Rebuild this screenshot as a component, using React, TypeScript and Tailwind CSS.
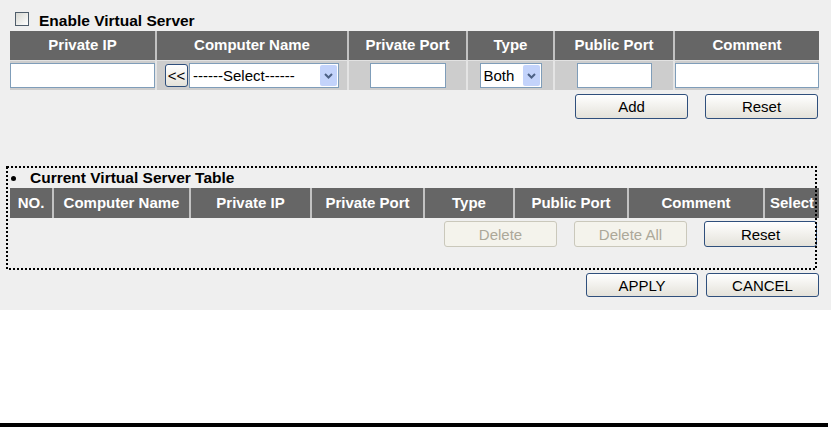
import React from 'react';

const font = "font-['Liberation_Sans',Arial,sans-serif]";

const Chevron = () => (
  <svg width="9" height="6" viewBox="0 0 9 6" fill="none">
    <path d="M1 1l3.5 3.5L8 1" stroke="#4d6185" strokeWidth="2" />
  </svg>
);

const FakeSelect = ({ label, className }: { label: string; className: string }) => (
  <div className={`flex h-[25px] items-center border border-[#7f9db9] bg-white ${className}`}>
    <span className="flex-1 pl-[3px] text-[15px] leading-none text-black">{label}</span>
    <span className="mr-px flex h-[21px] w-[17px] items-center justify-center rounded-[2px] bg-[#c3d3fb]">
      <Chevron />
    </span>
  </div>
);

const XpButton = ({
  children,
  className = '',
  disabled = false,
}: {
  children: React.ReactNode;
  className?: string;
  disabled?: boolean;
}) => (
  <button
    type="button"
    className={`flex items-center justify-center rounded-[3px] border text-[15px] leading-none ${
      disabled
        ? 'border-[#cac8bb] bg-[#f4f3ec] text-[#aca899]'
        : 'border-[#2f4f7c] bg-gradient-to-b from-white to-[#e4e2da] text-black'
    } ${className}`}
  >
    {children}
  </button>
);

const TextInput = ({ className }: { className: string }) => (
  <input type="text" className={`h-[25px] border border-[#7f9db9] bg-white ${className}`} />
);

export default function App() {
  return (
    <div className={`w-[831px] bg-white ${font}`}>
      <div className="h-[310px] bg-[#efefef] pt-[10px]">
        {/* Enable checkbox */}
        <div className="flex h-[21px] items-start pl-[15px]">
          <span className="mt-[2px] h-[14px] w-[14px] border border-[#4f5d6b] bg-gradient-to-br from-[#d8d8d2] to-white" />
          <span className="ml-[10px] text-[15.5px] font-bold leading-[21px] text-black">Enable Virtual Server</span>
        </div>

        {/* Add entry table */}
        <div className="ml-[10px] w-[809px]">
          <div className="flex h-[29px] bg-[#666666] text-[15px] font-bold text-white">
            <div className="flex w-[145px] items-center justify-center">Private IP</div>
            <div className="flex w-[192px] items-center justify-center border-l-2 border-[#c2c2c2]">Computer Name</div>
            <div className="flex w-[119px] items-center justify-center border-l-2 border-[#c2c2c2]">Private Port</div>
            <div className="flex w-[87px] items-center justify-center border-l-2 border-[#c2c2c2]">Type</div>
            <div className="flex w-[120px] items-center justify-center border-l-2 border-[#c2c2c2]">Public Port</div>
            <div className="flex w-[146px] items-center justify-center border-l-2 border-[#c2c2c2]">Comment</div>
          </div>
          <div className="flex h-[30px] border-t border-[#e2e2e2] bg-[#cdcdcd]">
            <div className="flex w-[145px] items-center">
              <TextInput className="w-[145px]" />
            </div>
            <div className="flex w-[192px] items-center border-l-2 border-[#e4e4e4] pl-[8px]">
              <XpButton className="h-[23px] w-[23px] text-[14px]">&lt;&lt;</XpButton>
              <FakeSelect label="------Select------" className="ml-px w-[150px]" />
            </div>
            <div className="flex w-[119px] items-center justify-center border-l-2 border-[#e4e4e4]">
              <TextInput className="w-[76px]" />
            </div>
            <div className="flex w-[87px] items-center justify-center border-l-2 border-[#e4e4e4]">
              <FakeSelect label="Both" className="w-[62px]" />
            </div>
            <div className="flex w-[120px] items-center justify-center border-l-2 border-[#e4e4e4]">
              <TextInput className="w-[75px]" />
            </div>
            <div className="flex w-[146px] items-center border-l-2 border-[#e4e4e4]">
              <TextInput className="w-[144px]" />
            </div>
          </div>
          <div className="mt-[4px] flex justify-end gap-[17px] pr-px">
            <XpButton className="h-[25px] w-[113px]">Add</XpButton>
            <XpButton className="h-[25px] w-[113px]">Reset</XpButton>
          </div>
        </div>

        {/* Current table */}
        <div className="relative ml-[6px] mt-[47px] h-[104px] w-[811px] pt-[2px]">
          <div className="flex h-[20px] items-center pl-[5px]">
            <span className="h-[5px] w-[5px] rounded-full bg-black" />
            <span className="ml-[14px] text-[15.5px] font-bold leading-[20px] text-black">Current Virtual Server Table</span>
          </div>
          <div className="ml-[4px] flex h-[30px] w-[809px] bg-[#666666] text-[15px] font-bold text-white">
            <div className="flex w-[42px] items-center justify-center">NO.</div>
            <div className="flex w-[137px] items-center justify-center border-l-2 border-[#c2c2c2]">Computer Name</div>
            <div className="flex w-[121px] items-center justify-center border-l-2 border-[#c2c2c2]">Private IP</div>
            <div className="flex w-[113px] items-center justify-center border-l-2 border-[#c2c2c2]">Private Port</div>
            <div className="flex w-[90px] items-center justify-center border-l-2 border-[#c2c2c2]">Type</div>
            <div className="flex w-[114px] items-center justify-center border-l-2 border-[#c2c2c2]">Public Port</div>
            <div className="flex w-[136px] items-center justify-center border-l-2 border-[#c2c2c2]">Comment</div>
            <div className="flex w-[56px] items-center justify-center overflow-hidden border-l-2 border-[#c2c2c2]">Select</div>
          </div>
          <div className="mt-[3px] flex justify-end gap-[17px]">
            <XpButton disabled className="h-[26px] w-[113px]">Delete</XpButton>
            <XpButton disabled className="h-[26px] w-[113px]">Delete All</XpButton>
            <XpButton className="h-[26px] w-[113px]">Reset</XpButton>
          </div>
          {/* dotted frame drawn over the table */}
          <svg className="pointer-events-none absolute left-0 top-0" width="811" height="104">
            <rect x="1" y="1" width="809" height="102" fill="none" stroke="#000" strokeWidth="2" strokeDasharray="2 2" />
          </svg>
        </div>

        <div className="mt-[3px] flex w-[819px] justify-end gap-[8px]">
          <XpButton className="h-[24px] w-[112px]">APPLY</XpButton>
          <XpButton className="h-[24px] w-[113px]">CANCEL</XpButton>
        </div>
      </div>
      <div className="mt-[113px] h-[4px] w-[828px] bg-black" />
    </div>
  );
}
